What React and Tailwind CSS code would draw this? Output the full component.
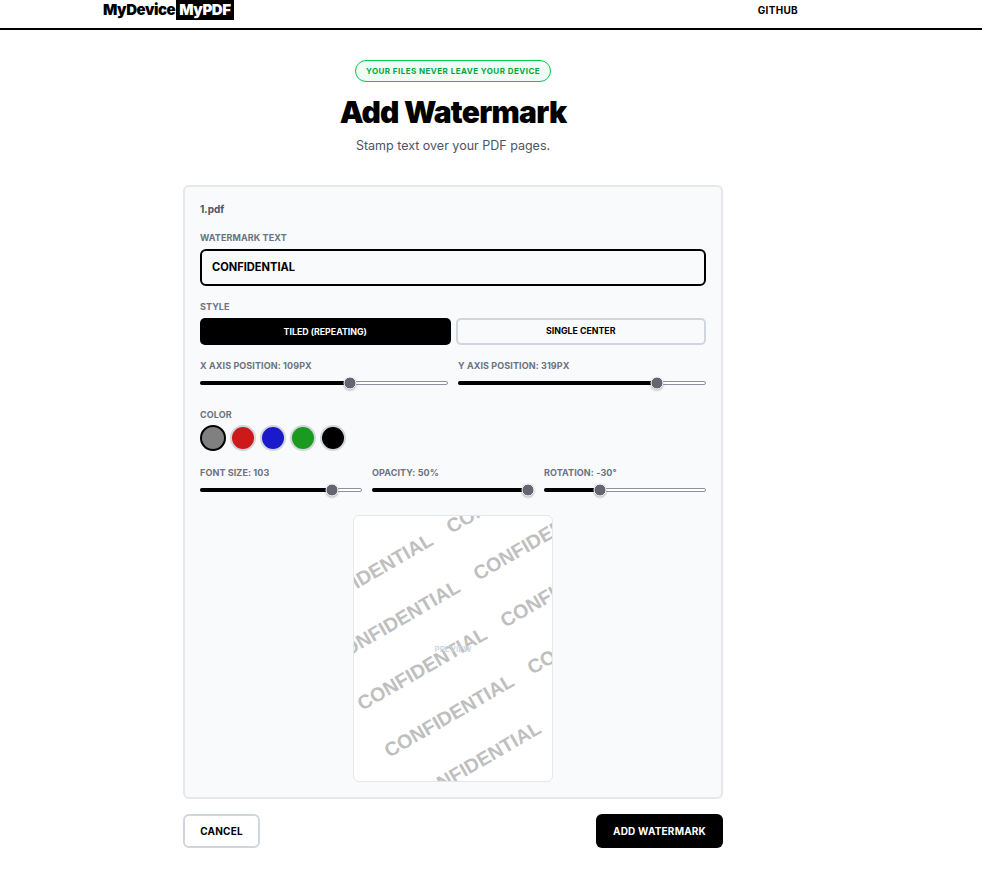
const marks = [
  [98.5, 205.5],
  [71.5, 158.5],
  [44.5, 111.5],
  [17.5, 64.5],
  [125.5, 252.5],
  [241.5, 122.5],
  [214.5, 75.5],
  [187.5, 28.5],
  [160.5, -18.5],
];

function Slider({ label, percent }) {
  return (
    <div className="flex-1">
      <div className="text-[9px] leading-[12px] font-bold tracking-[0.1px] text-gray-500 uppercase">{label}</div>
      <div className="relative mt-[9px] h-[4px] rounded-full bg-white border border-[#8f8fa0]">
        <div className="absolute -inset-px rounded-full bg-black" style={{ right: `${100 - percent}%` }} />
        <div
          className="absolute top-1/2 w-[13px] h-[13px] -translate-x-1/2 -translate-y-1/2 rounded-full bg-[#656572] border border-white shadow-[0_1px_2px_rgba(0,0,0,0.3)]"
          style={{ left: `${percent}%` }}
        />
      </div>
    </div>
  );
}

function Swatch({ color, active }) {
  return (
    <div
      className={`w-[26px] h-[26px] rounded-full border-2 ${active ? "border-black" : "border-gray-300"} ${color}`}
    />
  );
}

export default function App() {
  return (
    <div className="min-h-[882px] bg-white text-black font-['Inter',sans-serif]">
      <header className="h-[30px] border-b-2 border-black flex items-start pl-[103px] pr-[184px]">
        <div className="flex items-center h-[20px] text-[15px] font-black tracking-[-0.45px]">
          <span>MyDevice</span>
          <span className="ml-[1px] px-[3px] bg-black text-white h-[20px] leading-[20px]">MyPDF</span>
        </div>
        <a className="ml-auto text-[10px] leading-[20px] font-bold tracking-[0.3px]">GITHUB</a>
      </header>

      <main className="ml-[183px] w-[540px]">
        <div className="flex flex-col items-center">
          <div className="mt-[30px] h-[22px] w-[196px] flex items-center justify-center rounded-full border border-green-500 bg-[#f0fdf4] text-[8px] font-bold tracking-[0.45px] text-green-600">
            YOUR FILES NEVER LEAVE YOUR DEVICE
          </div>
          <h1 className="mt-[10px] text-[30px] leading-[40px] font-black tracking-[-0.75px]">Add Watermark</h1>
          <p className="mt-[4px] text-[12.5px] leading-[20px] text-gray-600">Stamp text over your PDF pages.</p>
        </div>

        <section className="mt-[29px] h-[614px] rounded-[6px] border-2 border-gray-200 bg-gray-50 px-[15px] pt-[15px]">
          <div className="text-[10px] leading-[14px] font-bold text-gray-600">1.pdf</div>

          <div className="mt-[16px] text-[9px] leading-[12px] font-bold tracking-[0.1px] text-gray-500">WATERMARK TEXT</div>
          <div className="mt-[5px] h-[37px] rounded-[6px] border-2 border-black flex items-center px-[10px] text-[11.1px] font-bold">
            CONFIDENTIAL
          </div>

          <div className="mt-[15px] text-[9px] leading-[12px] font-bold tracking-[0.1px] text-gray-500">STYLE</div>
          <div className="mt-[5px] grid grid-cols-2 gap-[5px]">
            <button className="h-[27px] rounded-[5px] bg-black text-white text-[8.8px] font-bold">TILED (REPEATING)</button>
            <button className="h-[27px] rounded-[5px] border-2 border-gray-300 pb-px text-[8.8px] font-bold">SINGLE CENTER</button>
          </div>

          <div className="mt-[15px] flex gap-[10px]">
            <Slider label="X axis position: 109px" percent={60.5} />
            <Slider label="Y axis position: 319px" percent={80.3} />
          </div>

          <div className="mt-[24px] text-[9px] leading-[12px] font-bold tracking-[0.1px] text-gray-500">COLOR</div>
          <div className="mt-[4px] flex gap-[4px] items-center">
            <Swatch color="bg-[#808080]" active />
            <Swatch color="bg-[#cc1a1a]" />
            <Swatch color="bg-[#1a1acc]" />
            <Swatch color="bg-[#1a9a1f]" />
            <Swatch color="bg-black" />
          </div>

          <div className="mt-[16px] flex gap-[10px]">
            <Slider label="Font size: 103" percent={81.8} />
            <Slider label="Opacity: 50%" percent={97} />
            <Slider label="Rotation: -30°" percent={34.5} />
          </div>

          <div className="mt-[23px] mx-auto relative w-[200px] h-[267px] rounded-[6px] border border-gray-200 bg-white overflow-hidden">
            <svg className="absolute inset-0" width="198" height="265" viewBox="0 0 198 265">
              {marks.map(([x, y]) => (
                <text
                  key={`${x}-${y}`}
                  x={x}
                  y={y}
                  textAnchor="middle"
                  transform={`rotate(-30 ${x} ${y})`}
                  fontFamily="'Liberation Sans', sans-serif"
                  fontWeight="700"
                  fontSize="19.6"
                  fill="#808080"
                  opacity="0.5"
                >
                  CONFIDENTIAL
                </text>
              ))}
            </svg>
            <div className="absolute inset-0 flex items-center justify-center text-[8px] font-semibold tracking-[0.1px] text-slate-300">PREVIEW</div>
          </div>
        </section>

        <div className="mt-[15px] flex justify-between">
          <button className="w-[77px] h-[34px] rounded-[6px] border-2 border-gray-300 text-[10px] font-bold tracking-[0.2px]">CANCEL</button>
          <button className="w-[127px] h-[34px] rounded-[6px] bg-black text-white text-[10px] font-bold tracking-[0.2px]">ADD WATERMARK</button>
        </div>
      </main>
    </div>
  );
}
